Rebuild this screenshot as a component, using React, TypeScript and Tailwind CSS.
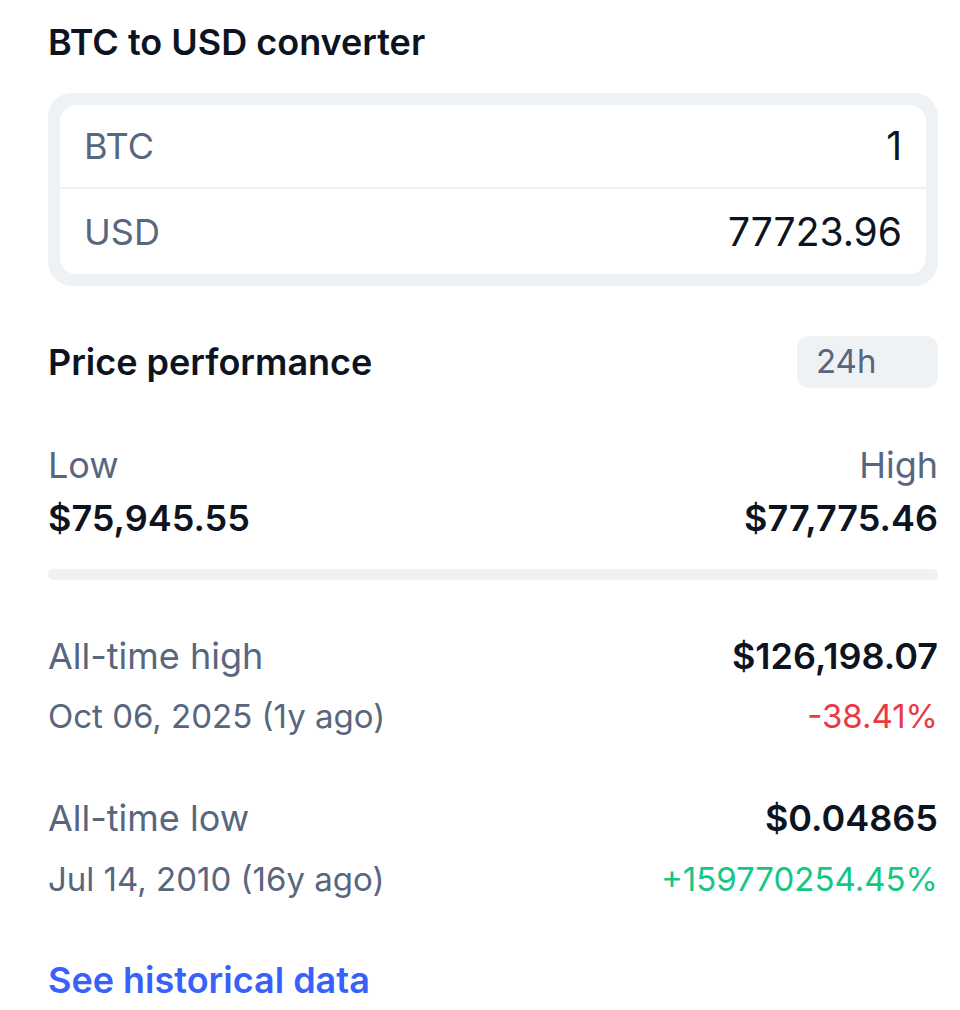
import React from 'react';

const Row: React.FC<{ label: string; value: string; last?: boolean }> = ({ label, value, last }) => (
  <div className={`flex items-center justify-between px-6 ${last ? 'h-[85px]' : 'h-[84px] border-b-2 border-[#eff2f5]'}`}>
    <span className="text-[36px] leading-10 text-[#58667e]">{label}</span>
    <span className="text-[39px] leading-10 text-[#0d1421]">{value}</span>
  </div>
);

export default function App() {
  return (
    <div
      className="bg-white min-h-[1010px] pl-12 pr-[22px] pt-[22px] antialiased"
      style={{ fontFamily: 'Inter, "Noto Sans", sans-serif' }}
    >
      {/* converter */}
      <h2 className="text-[36px] leading-10 font-semibold text-[#0d1421]">BTC to USD converter</h2>
      <div className="mt-[31px] bg-[#eff2f5] rounded-3xl p-3">
        <div className="bg-white rounded-2xl">
          <Row label="BTC" value="1" />
          <Row label="USD" value="77723.96" last />
        </div>
      </div>

      {/* price performance */}
      <div className="mt-[50px] h-[52px] flex items-center justify-between">
        <h2 className="text-[36px] leading-10 font-semibold text-[#0d1421]">Price performance</h2>
        <div className="w-[141px] h-[52px] bg-[#eff2f5] rounded-xl flex items-center pl-[19px] text-[33px] text-[#58667e]">
          24h
        </div>
      </div>

      <div className="mt-[57px] flex justify-between text-[36px] leading-10">
        <div>
          <div className="text-[#58667e]">Low</div>
          <div className="mt-[13px] font-semibold text-[#0d1421]">$75,945.55</div>
        </div>
        <div className="text-right">
          <div className="text-[#58667e]">High</div>
          <div className="mt-[13px] font-semibold text-[#0d1421]">$77,775.46</div>
        </div>
      </div>
      <div className="mt-[31px] h-[11px] rounded-full bg-[#eff2f5]" />

      {/* all time */}
      <div className="mt-[56px] text-[36px] leading-10">
        <div className="flex justify-between">
          <span className="text-[#58667e]">All-time high</span>
          <span className="font-semibold text-[#0d1421]">$126,198.07</span>
        </div>
        <div className="mt-5 flex justify-between text-[33px]">
          <span className="text-[#58667e]">Oct 06, 2025 (1y ago)</span>
          <span className="text-[#ea3943]">-38.41%</span>
        </div>
      </div>

      <div className="mt-[62px] text-[36px] leading-10">
        <div className="flex justify-between">
          <span className="text-[#58667e]">All-time low</span>
          <span className="font-semibold text-[#0d1421]">$0.04865</span>
        </div>
        <div className="mt-[21px] flex justify-between text-[33px]">
          <span className="text-[#58667e]">Jul 14, 2010 (16y ago)</span>
          <span className="text-[#16c784]">+159770254.45%</span>
        </div>
      </div>

      <a href="#" className="block mt-[61px] text-[36px] leading-10 font-semibold text-[#3861fb]">
        See historical data
      </a>
    </div>
  );
}
